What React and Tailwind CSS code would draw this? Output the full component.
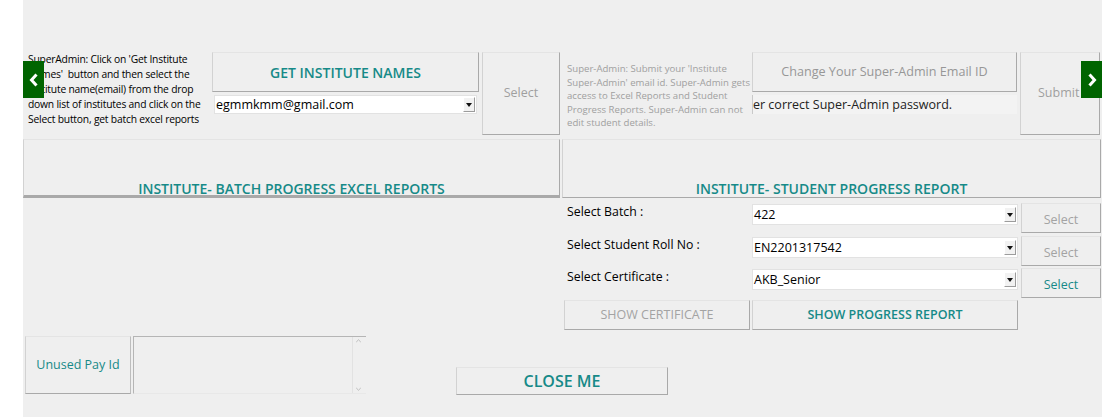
const font = { fontFamily: '"Open Sans", "Noto Sans", sans-serif' };

const Btn = ({ className = "", children }) => (
  <div
    className={`flex items-center justify-center border border-t-[#e4e4e4] border-l-[#d2d2d2] border-b-[#a9a9a9] border-r-[#a9a9a9] bg-[#efefef] ${className}`}
  >
    {children}
  </div>
);

const Combo = ({ value, className = "" }) => (
  <div className={`flex items-center bg-white border border-[#e2e2e2] ${className}`}>
    <span className="flex-1 pl-[1px] text-[12.5px] leading-[17px] text-black whitespace-nowrap overflow-hidden">{value}</span>
    <span className="flex items-center justify-center w-[12px] h-[15px] mr-[1px] bg-[#f2f2f2] border border-t-[#fff] border-l-[#fff] border-b-[#9c9c9c] border-r-[#9c9c9c]">
      <svg width="6" height="4" viewBox="0 0 6 4"><path d="M0 0h6L3 4z" fill="#111" /></svg>
    </span>
  </div>
);

const Arrow = ({ dir, className = "" }) => (
  <div className={`absolute flex items-center justify-center w-[21px] h-[37px] bg-[#006400] ${className}`}>
    <svg width="10" height="14" viewBox="0 0 10 14">
      {dir === "left" ? (
        <path d="M7.5 1.5 2.5 7l5 5.5" stroke="#fff" strokeWidth="3" fill="none" />
      ) : (
        <path d="M2.5 1.5 7.5 7l-5 5.5" stroke="#fff" strokeWidth="3" fill="none" />
      )}
    </svg>
  </div>
);

export default function App() {
  return (
    <div className="w-[1110px] h-[417px] bg-white overflow-hidden" style={font}>
      <div className="relative ml-[23px] w-[1079px] h-[417px] bg-[#efefef]">
        {/* top row */}
        <div className="flex pt-[52px] h-[135px]">
          <div className="w-[189px] pl-[5px] text-[10.3px] leading-[15px] tracking-[-0.2px] text-black">
            SuperAdmin: Click on 'Get Institute Names'&nbsp; button and then select the Institute name(email) from the drop down list of institutes and click on the Select button, get batch excel reports
          </div>
          <div className="w-[267px] flex flex-col">
            <Btn className="h-[40px] text-[14px] font-semibold text-[#168a88]">GET INSTITUTE NAMES</Btn>
            <Combo value="egmmkmm@gmail.com" className="mt-[3px] ml-[2px] w-[263px] h-[19px]" />
          </div>
          <Btn className="ml-[3px] w-[78px] h-[83px] text-[12.5px] text-[#9f9f9f]">Select</Btn>
          <div className="w-[192px] pl-[7px] pt-[10px] text-[9.6px] leading-[13.5px] text-[#a0a0a0]">
            Super-Admin: Submit your 'Institute Super-Admin' email id. Super-Admin gets access to Excel Reports and Student Progress Reports. Super-Admin can not edit student details.
          </div>
          <div className="w-[265px] flex flex-col">
            <Btn className="h-[40px] text-[12.6px] text-[#979797]">Change Your Super-Admin Email ID</Btn>
            <div className="mt-[3px] h-[19px] flex items-center bg-[#f3f3f3] border-l border-[#c9c9c9] overflow-hidden">
              <span className="text-[12.5px] leading-[17px] text-[#222] whitespace-nowrap">er correct Super-Admin password.</span>
            </div>
          </div>
          <Btn className="ml-[3px] w-[80px] h-[83px] text-[12.5px] text-[#9f9f9f] justify-start pl-[17px]">Submit</Btn>
        </div>
        <Arrow dir="left" className="left-0 top-[61px]" />
        <Arrow dir="right" className="left-[1058px] top-[61px]" />

        {/* section headers */}
        <div className="flex mt-[4px] h-[59px]">
          <Btn className="w-[537px] h-[59px] items-end pb-0 border-b-[3px] text-[14px] leading-[13px] font-semibold text-[#168a88]">
            INSTITUTE- BATCH PROGRESS EXCEL REPORTS
          </Btn>
          <Btn className="ml-[2px] w-[539px] h-[59px] items-end pb-[1px] text-[14px] leading-[15px] font-semibold text-[#168a88]">
            INSTITUTE- STUDENT PROGRESS REPORT
          </Btn>
        </div>

        {/* student report controls */}
        <div className="flex mt-[5px]">
          <div className="w-[541px]" />
          <div className="flex flex-col">
            {[
              ["Select Batch :", "422", false, ""],
              ["Select Student Roll No :", "EN2201317542", false, "mt-[3px]"],
              ["Select Certificate :", "AKB_Senior", true, "mt-[2px]"],
            ].map(([label, value, active, gap]) => (
              <div key={label} className={`flex items-start ${gap}`}>
                <div className="w-[188px] pl-[3px] text-[12.3px] leading-[18px] text-black">{label}</div>
                <Combo value={value} className="mt-[1px] w-[266px] h-[21px]" />
                <Btn
                  className={`ml-[3px] w-[80px] h-[30px] pt-[4px] text-[12.5px] ${active ? "text-[#168a88]" : "text-[#a3a3a3]"}`}
                >
                  Select
                </Btn>
              </div>
            ))}
            <div className="flex mt-[2px]">
              <Btn className="w-[186px] h-[30px] text-[12.5px] text-[#a3a3a3]">SHOW CERTIFICATE</Btn>
              <Btn className="ml-[2px] w-[266px] h-[30px] text-[12.5px] font-semibold text-[#168a88] border-[#86bcbc] border-t-[#86bcbc] border-l-[#86bcbc]">
                SHOW PROGRESS REPORT
              </Btn>
            </div>
          </div>
        </div>

        {/* bottom row */}
        <div className="flex items-start mt-[6px] pl-[2px]">
          <Btn className="w-[106px] h-[58px] text-[12.5px] text-[#168a88] border-t-[#dcdcdc] border-r-[#bdbdbd]">Unused Pay Id</Btn>
          <div className="relative ml-[2px] w-[233px] h-[58px] border-t border-l border-[#b5b5b5] border-b border-b-[#e8e8e8] bg-[#efefef]">
            <div className="absolute right-[2px] top-0 bottom-0 w-[12px] flex flex-col items-center justify-between py-[2px] border-l border-[#e2e2e2]">
              <svg width="5" height="4" viewBox="0 0 5 4"><path d="M0 3.5 2.5 .5 5 3.5" stroke="#c4c4c4" fill="none" /></svg>
              <svg width="5" height="4" viewBox="0 0 5 4"><path d="M0 .5 2.5 3.5 5 .5" stroke="#c4c4c4" fill="none" /></svg>
            </div>
          </div>
          <Btn className="ml-[90px] mt-[31px] w-[212px] h-[28px] text-[16px] font-semibold text-[#168a88]">CLOSE ME</Btn>
        </div>
      </div>
    </div>
  );
}
